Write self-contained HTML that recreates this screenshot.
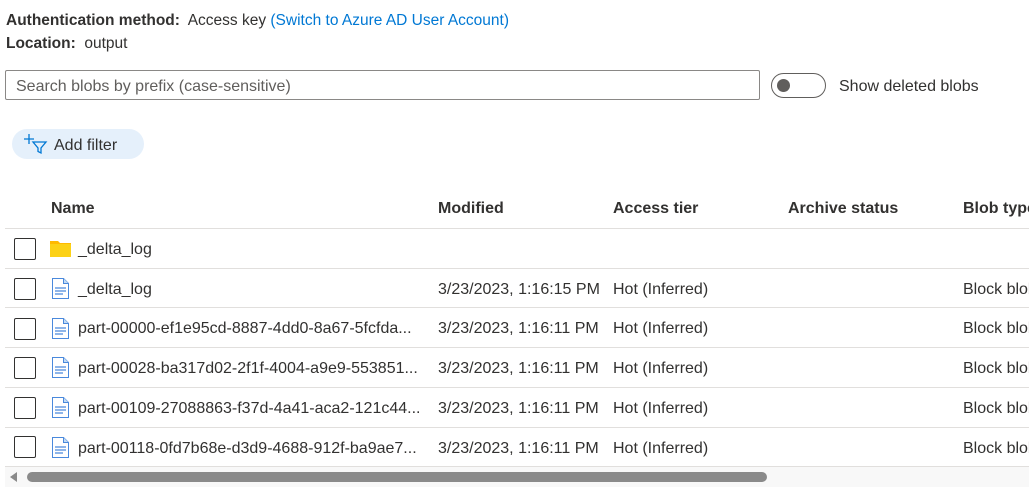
<!DOCTYPE html>
<html><head><style>
body{margin:0;width:1029px;height:496px;overflow:hidden;background:#fff;font-family:"Liberation Sans",sans-serif;font-size:16px;line-height:18px;color:#323130;position:relative}
.a{position:absolute;white-space:nowrap}
.b{font-weight:bold}
.line{position:absolute;left:5px;width:1024px;height:1px;background:#e1dfdd}
.cb{position:absolute;left:14px;width:20px;height:20px;border:1.5px solid #323130;border-radius:2px}
</style></head><body>
<div class="a" style="left:6px;top:12px;font-size:15.5px"><span class="b">Authentication method:</span>&nbsp; Access key <span style="color:#0078d4">(Switch to Azure AD User Account)</span></div>
<div class="a" style="left:6px;top:35px;font-size:15.5px"><span class="b">Location:</span>&nbsp; output</div>
<div class="a" style="left:5px;top:70px;width:753px;height:28px;border:1px solid #8a8886;border-radius:2px"></div>
<div class="a" style="left:16px;top:78px;color:#605e5c">Search blobs by prefix (case-sensitive)</div>
<div class="a" style="left:771px;top:73px;width:55px;height:25px;border:1px solid #605e5c;border-radius:13px;box-sizing:border-box"></div>
<div class="a" style="left:777px;top:79px;width:13px;height:13px;border-radius:50%;background:#605e5c"></div>
<div class="a" style="left:839px;top:78px">Show deleted blobs</div>
<div class="a" style="left:12px;top:129px;width:132px;height:30px;border-radius:15px;background:#e5f0fb"></div>
<svg class="a" style="left:24px;top:133px" width="24" height="22" viewBox="0 0 24 22" fill="none" stroke="#0078d4" stroke-width="1.3"><path d="M5 1v10M0 6h10"/><path d="M9 9h13l-5 6v5l-3-1.5V15z"/></svg>
<div class="a" style="left:54px;top:137px">Add filter</div>
<div class="a b" style="left:51px;top:200px">Name</div>
<div class="a b" style="left:438px;top:200px">Modified</div>
<div class="a b" style="left:613px;top:200px">Access tier</div>
<div class="a b" style="left:788px;top:200px">Archive status</div>
<div class="a b" style="left:963px;top:200px">Blob type</div>
<div class="line" style="top:228px"></div>
<div class="line" style="top:268px"></div>
<div class="line" style="top:307px"></div>
<div class="line" style="top:347px"></div>
<div class="line" style="top:387px"></div>
<div class="line" style="top:427px"></div>
<div class="line" style="top:466px"></div>
<div class="cb" style="top:238px"></div>
<svg class="a" style="left:50px;top:240px" width="21" height="17"><path d="M0 1h8l2 2h11v14H0z" fill="#ffb900"/><path d="M0 4h21v13H0z" fill="#fcd116"/></svg>
<div class="a" style="left:78px;top:241px">_delta_log</div>
<div class="cb" style="top:278px"></div><svg class="a" style="left:52px;top:278px" width="17" height="21"><path d="M.5 .5h11l5 5v15H.5z" fill="#fff" stroke="#4a89dc"/><path d="M11.5 .5v5h5" fill="#c3dcf5" stroke="#4a89dc"/><path d="M3 10h11M3 13h11M3 16h8" stroke="#4a89dc" stroke-width="1.3"/></svg><div class="a" style="left:78px;top:281px">_delta_log</div><div class="a" style="left:438px;top:281px">3/23/2023, 1:16:15 PM</div><div class="a" style="left:613px;top:281px">Hot (Inferred)</div><div class="a" style="left:963px;top:281px">Block blob</div>
<div class="cb" style="top:318px"></div><svg class="a" style="left:52px;top:318px" width="17" height="21"><path d="M.5 .5h11l5 5v15H.5z" fill="#fff" stroke="#4a89dc"/><path d="M11.5 .5v5h5" fill="#c3dcf5" stroke="#4a89dc"/><path d="M3 10h11M3 13h11M3 16h8" stroke="#4a89dc" stroke-width="1.3"/></svg><div class="a" style="left:78px;top:320px">part-00000-ef1e95cd-8887-4dd0-8a67-5fcfda...</div><div class="a" style="left:438px;top:320px">3/23/2023, 1:16:11 PM</div><div class="a" style="left:613px;top:320px">Hot (Inferred)</div><div class="a" style="left:963px;top:320px">Block blob</div>
<div class="cb" style="top:357px"></div><svg class="a" style="left:52px;top:357px" width="17" height="21"><path d="M.5 .5h11l5 5v15H.5z" fill="#fff" stroke="#4a89dc"/><path d="M11.5 .5v5h5" fill="#c3dcf5" stroke="#4a89dc"/><path d="M3 10h11M3 13h11M3 16h8" stroke="#4a89dc" stroke-width="1.3"/></svg><div class="a" style="left:78px;top:360px">part-00028-ba317d02-2f1f-4004-a9e9-553851...</div><div class="a" style="left:438px;top:360px">3/23/2023, 1:16:11 PM</div><div class="a" style="left:613px;top:360px">Hot (Inferred)</div><div class="a" style="left:963px;top:360px">Block blob</div>
<div class="cb" style="top:397px"></div><svg class="a" style="left:52px;top:397px" width="17" height="21"><path d="M.5 .5h11l5 5v15H.5z" fill="#fff" stroke="#4a89dc"/><path d="M11.5 .5v5h5" fill="#c3dcf5" stroke="#4a89dc"/><path d="M3 10h11M3 13h11M3 16h8" stroke="#4a89dc" stroke-width="1.3"/></svg><div class="a" style="left:78px;top:400px">part-00109-27088863-f37d-4a41-aca2-121c44...</div><div class="a" style="left:438px;top:400px">3/23/2023, 1:16:11 PM</div><div class="a" style="left:613px;top:400px">Hot (Inferred)</div><div class="a" style="left:963px;top:400px">Block blob</div>
<div class="cb" style="top:436px"></div><svg class="a" style="left:52px;top:437px" width="17" height="21"><path d="M.5 .5h11l5 5v15H.5z" fill="#fff" stroke="#4a89dc"/><path d="M11.5 .5v5h5" fill="#c3dcf5" stroke="#4a89dc"/><path d="M3 10h11M3 13h11M3 16h8" stroke="#4a89dc" stroke-width="1.3"/></svg><div class="a" style="left:78px;top:440px">part-00118-0fd7b68e-d3d9-4688-912f-ba9ae7...</div><div class="a" style="left:438px;top:440px">3/23/2023, 1:16:11 PM</div><div class="a" style="left:613px;top:440px">Hot (Inferred)</div><div class="a" style="left:963px;top:440px">Block blob</div>
<div class="a" style="left:5px;top:467px;width:1024px;height:20px;background:#f8f8f8"></div>
<svg class="a" style="left:10px;top:472px" width="8" height="10"><path d="M7 0v10L0 5z" fill="#8a8a8a"/></svg>
<div class="a" style="left:27px;top:472px;width:740px;height:10px;border-radius:5px;background:#8a8a8a"></div>
</body></html>
